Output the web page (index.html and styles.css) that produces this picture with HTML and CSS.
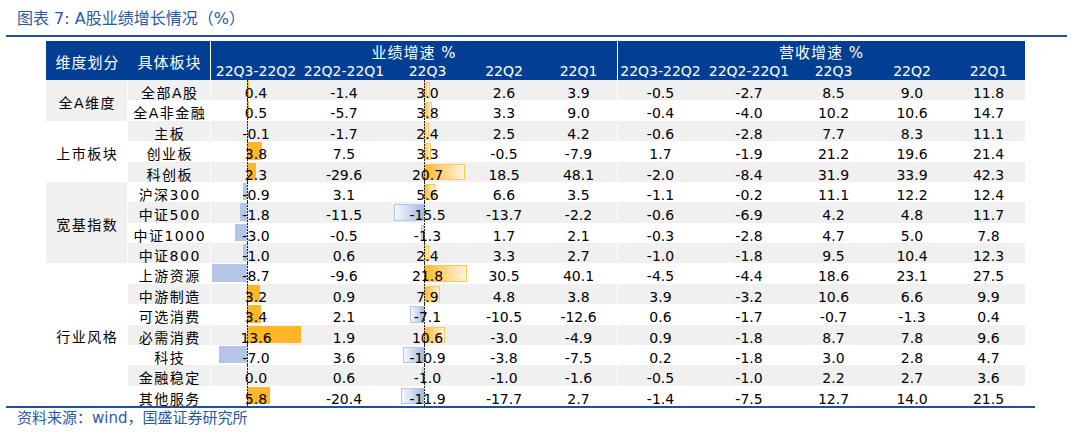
FILE: index.html
```html
<!DOCTYPE html>
<html lang="zh">
<head>
<meta charset="utf-8">
<title>A股业绩增长情况</title>
<link rel="stylesheet" href="styles.css">
</head>
<body>
<h1 class="title">图表 7: A股业绩增长情况（%）</h1>
<div class="rule"></div>
<div class="tbl">
  <div class="h hA">维度划分</div>
  <div class="h hB">具体板块</div>
  <div class="h hg sep">业绩增速 %</div>
  <div class="h hg">营收增速 %</div>
  <div class="h hq">22Q3-22Q2</div>
  <div class="h hq">22Q2-22Q1</div>
  <div class="h hq">22Q3</div>
  <div class="h hq">22Q2</div>
  <div class="h hq sep">22Q1</div>
  <div class="h hq">22Q3-22Q2</div>
  <div class="h hq">22Q2-22Q1</div>
  <div class="h hq">22Q3</div>
  <div class="h hq">22Q2</div>
  <div class="h hq">22Q1</div>

  <div class="r g">
    <div class="grp s2 gbg">全A维度</div>
    <div class="lab">全部A股</div>
    <div class="v c1"><i class="bar p" style="width:1.6px"></i><span>0.4</span><i class="ax"></i></div>
    <div class="v">-1.4</div>
    <div class="v c3"><i class="bar p" style="width:5.9px"></i><span>3.0</span><i class="ax"></i></div>
    <div class="v">2.6</div>
    <div class="v sep">3.9</div>
    <div class="v">-0.5</div><div class="v">-2.7</div><div class="v">8.5</div><div class="v">9.0</div><div class="v">11.8</div>
  </div>
  <div class="r">
    <div class="lab">全A非金融</div>
    <div class="v c1"><i class="bar p" style="width:2px"></i><span>0.5</span><i class="ax"></i></div>
    <div class="v">-5.7</div>
    <div class="v c3"><i class="bar p" style="width:7.5px"></i><span>3.8</span><i class="ax"></i></div>
    <div class="v">3.3</div>
    <div class="v sep">9.0</div>
    <div class="v">-0.4</div><div class="v">-4.0</div><div class="v">10.2</div><div class="v">10.6</div><div class="v">14.7</div>
  </div>
  <div class="r g">
    <div class="grp s3">上市板块</div>
    <div class="lab">主板</div>
    <div class="v c1"><i class="bar n" style="width:0.4px"></i><span>-0.1</span><i class="ax"></i></div>
    <div class="v">-1.7</div>
    <div class="v c3"><i class="bar p" style="width:4.7px"></i><span>2.4</span><i class="ax"></i></div>
    <div class="v">2.5</div>
    <div class="v sep">4.2</div>
    <div class="v">-0.6</div><div class="v">-2.8</div><div class="v">7.7</div><div class="v">8.3</div><div class="v">11.1</div>
  </div>
  <div class="r">
    <div class="lab">创业板</div>
    <div class="v c1"><i class="bar p" style="width:15.2px"></i><span>3.8</span><i class="ax"></i></div>
    <div class="v">7.5</div>
    <div class="v c3"><i class="bar p" style="width:6.5px"></i><span>3.3</span><i class="ax"></i></div>
    <div class="v">-0.5</div>
    <div class="v sep">-7.9</div>
    <div class="v">1.7</div><div class="v">-1.9</div><div class="v">21.2</div><div class="v">19.6</div><div class="v">21.4</div>
  </div>
  <div class="r g">
    <div class="lab">科创板</div>
    <div class="v c1"><i class="bar p" style="width:9.2px"></i><span>2.3</span><i class="ax"></i></div>
    <div class="v">-29.6</div>
    <div class="v c3"><i class="bar p" style="width:40.8px"></i><span>20.7</span><i class="ax"></i></div>
    <div class="v">18.5</div>
    <div class="v sep">48.1</div>
    <div class="v">-2.0</div><div class="v">-8.4</div><div class="v">31.9</div><div class="v">33.9</div><div class="v">42.3</div>
  </div>
  <div class="r">
    <div class="grp s4 gbg">宽基指数</div>
    <div class="lab">沪深300</div>
    <div class="v c1"><i class="bar n" style="width:3.6px"></i><span>-0.9</span><i class="ax"></i></div>
    <div class="v">3.1</div>
    <div class="v c3"><i class="bar p" style="width:11px"></i><span>5.6</span><i class="ax"></i></div>
    <div class="v">6.6</div>
    <div class="v sep">3.5</div>
    <div class="v">-1.1</div><div class="v">-0.2</div><div class="v">11.1</div><div class="v">12.2</div><div class="v">12.4</div>
  </div>
  <div class="r g">
    <div class="lab">中证500</div>
    <div class="v c1"><i class="bar n" style="width:7.2px"></i><span>-1.8</span><i class="ax"></i></div>
    <div class="v">-11.5</div>
    <div class="v c3"><i class="bar n" style="width:30.5px"></i><span>-15.5</span><i class="ax"></i></div>
    <div class="v">-13.7</div>
    <div class="v sep">-2.2</div>
    <div class="v">-0.6</div><div class="v">-6.9</div><div class="v">4.2</div><div class="v">4.8</div><div class="v">11.7</div>
  </div>
  <div class="r">
    <div class="lab">中证1000</div>
    <div class="v c1"><i class="bar n" style="width:12px"></i><span>-3.0</span><i class="ax"></i></div>
    <div class="v">-0.5</div>
    <div class="v c3"><i class="bar n" style="width:2.6px"></i><span>-1.3</span><i class="ax"></i></div>
    <div class="v">1.7</div>
    <div class="v sep">2.1</div>
    <div class="v">-0.3</div><div class="v">-2.8</div><div class="v">4.7</div><div class="v">5.0</div><div class="v">7.8</div>
  </div>
  <div class="r g">
    <div class="lab">中证800</div>
    <div class="v c1"><i class="bar n" style="width:4px"></i><span>-1.0</span><i class="ax"></i></div>
    <div class="v">0.6</div>
    <div class="v c3"><i class="bar p" style="width:4.7px"></i><span>2.4</span><i class="ax"></i></div>
    <div class="v">3.3</div>
    <div class="v sep">2.7</div>
    <div class="v">-1.0</div><div class="v">-1.8</div><div class="v">9.5</div><div class="v">10.4</div><div class="v">12.3</div>
  </div>
  <div class="r">
    <div class="grp s7">行业风格</div>
    <div class="lab">上游资源</div>
    <div class="v c1"><i class="bar n" style="width:34.8px"></i><span>-8.7</span><i class="ax"></i></div>
    <div class="v">-9.6</div>
    <div class="v c3"><i class="bar p" style="width:42.9px"></i><span>21.8</span><i class="ax"></i></div>
    <div class="v">30.5</div>
    <div class="v sep">40.1</div>
    <div class="v">-4.5</div><div class="v">-4.4</div><div class="v">18.6</div><div class="v">23.1</div><div class="v">27.5</div>
  </div>
  <div class="r g">
    <div class="lab">中游制造</div>
    <div class="v c1"><i class="bar p" style="width:12.8px"></i><span>3.2</span><i class="ax"></i></div>
    <div class="v">0.9</div>
    <div class="v c3"><i class="bar p" style="width:15.6px"></i><span>7.9</span><i class="ax"></i></div>
    <div class="v">4.8</div>
    <div class="v sep">3.8</div>
    <div class="v">3.9</div><div class="v">-3.2</div><div class="v">10.6</div><div class="v">6.6</div><div class="v">9.9</div>
  </div>
  <div class="r">
    <div class="lab">可选消费</div>
    <div class="v c1"><i class="bar p" style="width:13.6px"></i><span>3.4</span><i class="ax"></i></div>
    <div class="v">2.1</div>
    <div class="v c3"><i class="bar n" style="width:14px"></i><span>-7.1</span><i class="ax"></i></div>
    <div class="v">-10.5</div>
    <div class="v sep">-12.6</div>
    <div class="v">0.6</div><div class="v">-1.7</div><div class="v">-0.7</div><div class="v">-1.3</div><div class="v">0.4</div>
  </div>
  <div class="r g">
    <div class="lab">必需消费</div>
    <div class="v c1"><i class="bar p" style="width:54.4px"></i><span>13.6</span><i class="ax"></i></div>
    <div class="v">1.9</div>
    <div class="v c3"><i class="bar p" style="width:20.9px"></i><span>10.6</span><i class="ax"></i></div>
    <div class="v">-3.0</div>
    <div class="v sep">-4.9</div>
    <div class="v">0.9</div><div class="v">-1.8</div><div class="v">8.7</div><div class="v">7.8</div><div class="v">9.6</div>
  </div>
  <div class="r">
    <div class="lab">科技</div>
    <div class="v c1"><i class="bar n" style="width:28px"></i><span>-7.0</span><i class="ax"></i></div>
    <div class="v">3.6</div>
    <div class="v c3"><i class="bar n" style="width:21.5px"></i><span>-10.9</span><i class="ax"></i></div>
    <div class="v">-3.8</div>
    <div class="v sep">-7.5</div>
    <div class="v">0.2</div><div class="v">-1.8</div><div class="v">3.0</div><div class="v">2.8</div><div class="v">4.7</div>
  </div>
  <div class="r g">
    <div class="lab">金融稳定</div>
    <div class="v c1"><span>0.0</span><i class="ax"></i></div>
    <div class="v">0.6</div>
    <div class="v c3"><i class="bar n" style="width:2px"></i><span>-1.0</span><i class="ax"></i></div>
    <div class="v">-1.0</div>
    <div class="v sep">-1.6</div>
    <div class="v">-0.5</div><div class="v">-1.0</div><div class="v">2.2</div><div class="v">2.7</div><div class="v">3.6</div>
  </div>
  <div class="r">
    <div class="lab">其他服务</div>
    <div class="v c1"><i class="bar p" style="width:23.2px"></i><span>5.8</span><i class="ax"></i></div>
    <div class="v">-20.4</div>
    <div class="v c3"><i class="bar n" style="width:23.4px"></i><span>-11.9</span><i class="ax"></i></div>
    <div class="v">-17.7</div>
    <div class="v sep">2.7</div>
    <div class="v">-1.4</div><div class="v">-7.5</div><div class="v">12.7</div><div class="v">14.0</div><div class="v">21.5</div>
  </div>
</div>
<div class="rule rule2"></div>
<p class="src">资料来源：wind，国盛证券研究所</p>
</body>
</html>
```

FILE: styles.css
```css
* { box-sizing: border-box; }

body {
  margin: 0;
  width: 1080px;
  background: #fff;
  color: #000;
  font-family: "DejaVu Sans", "Noto Sans CJK SC", sans-serif;
}

.title {
  margin: 0;
  height: 35px;
  padding: 9px 0 0 17px;
  font-size: 16px;
  line-height: 20px;
  font-weight: normal;
  color: #2a5aa6;
}

.rule {
  margin-left: 6px;
  width: 1061px;
  height: 2px;
  background: #1f4fa0;
}

.rule2 {
  width: 1029px;
}

.tbl {
  display: grid;
  margin: 4px 0 0 46px;
  width: 979px;
  grid-template-columns: 82px 83px 90px 86px 81px 72px 78px 85px 92px 77px 80px 73px;
  grid-template-rows: 20px 19px repeat(16, 20.375px);
}

/* header */
.h {
  background: #023f94;
  color: #fff;
  white-space: nowrap;
}

.hA, .hB {
  grid-row: 1 / 3;
  display: flex;
  align-items: center;
  justify-content: center;
  padding-top: 2px;
  font-size: 15px;
  letter-spacing: 1px;
  text-indent: 1px;
}

.hA { grid-column: 1; }
.hB { grid-column: 2; border-right: 1px solid #fff; }

.hg {
  grid-column: span 5;
  text-align: center;
  font-size: 15px;
  letter-spacing: 1px;
  line-height: 18px;
  padding-top: 3px;
}

.hq {
  text-align: center;
  font-size: 14px;
  line-height: 16px;
  padding-top: 2px;
}

.sep { border-right: 1px solid #fff; }

/* body rows */
.r { display: contents; }

.grp {
  grid-column: 1;
  display: flex;
  align-items: center;
  justify-content: center;
  padding-top: 3px;
  font-size: 14px;
  letter-spacing: 1.5px;
  text-indent: 1.5px;
  border-right: 1px solid #fff;
}

.s2 { grid-row: span 2; }
.s3 { grid-row: span 3; }
.s4 { grid-row: span 4; }
.s7 { grid-row: span 7; }

.gbg { background: #f0f0f0; }

.lab {
  grid-column: 2;
  text-align: center;
  font-size: 14px;
  line-height: 16px;
  padding-top: 5px;
  letter-spacing: 1.5px;
  text-indent: 1.5px;
  white-space: nowrap;
  border-right: 1px solid #fff;
}

.v {
  position: relative;
  text-align: center;
  font-size: 14px;
  line-height: 16px;
  padding-top: 5px;
  white-space: nowrap;
}

.r.g > .lab,
.r.g > .v { background: #f0f0f0; }

.v span { position: relative; z-index: 1; }

/* data bars */
.bar {
  position: absolute;
  top: 1px;
  bottom: 2px;
}

.c1 .bar.p { left: 36px; background: #ffb629; }
.c1 .bar.n { right: calc(100% - 36px); background: #b4c6e7; }

.c3 .bar { top: 2px; bottom: 2px; }
.c3 .bar.p {
  left: 37px;
  background: linear-gradient(to right, #ffb629, #fff4de);
  border: 1px solid #ffc658;
  border-left: none;
}
.c3 .bar.n {
  right: calc(100% - 37px);
  background: linear-gradient(to left, #a3badf, #f5f8fd);
  border: 1px solid #b4c6e7;
  border-right: none;
}

.ax {
  position: absolute;
  top: 0;
  bottom: 0;
  width: 1px;
  z-index: 2;
  background: repeating-linear-gradient(to bottom, #222 0 2px, transparent 2px 3px);
}

.c1 .ax { left: 36px; }
.c3 .ax { left: 37px; }

.src {
  margin: 0;
  padding-left: 17px;
  font-size: 15px;
  line-height: 20px;
  color: #2a5aa6;
}
```
